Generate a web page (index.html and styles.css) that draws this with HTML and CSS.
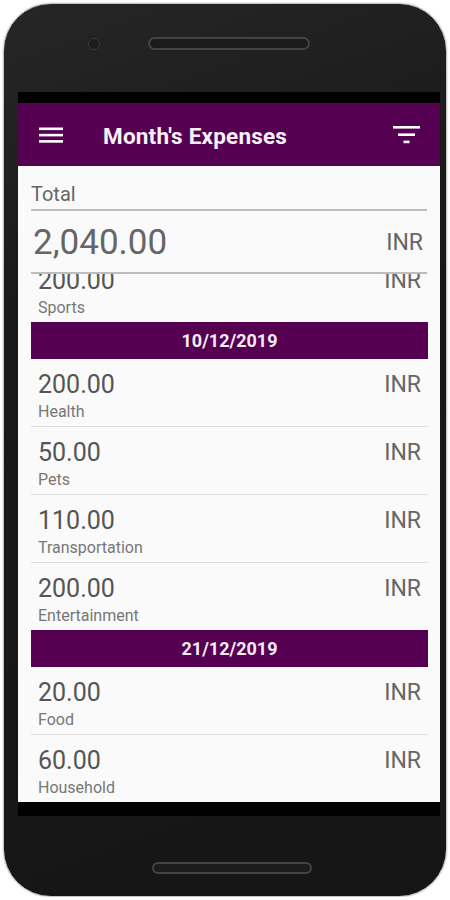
FILE: index.html
```html
<!DOCTYPE html>
<html lang="en">
<head>
    <meta charset="UTF-8">
    <meta name="viewport" content="width=device-width, initial-scale=1.0">
    <title>Month's Expenses</title>
    <link rel="stylesheet" href="styles.css">
</head>
<body>
    <div class="phone">
        <div class="bezel-top">
            <span class="camera"></span>
            <span class="speaker"></span>
        </div>

        <div class="screen">
            <div class="status-bar"></div>

            <div class="app-bar">
                <svg class="menu-icon" width="24" height="16" viewBox="0 0 24 16">
                    <rect x="0" y="0.5" width="24" height="2.6" fill="#fff"/>
                    <rect x="0" y="6.8" width="24" height="2.6" fill="#fff"/>
                    <rect x="0" y="13.1" width="24" height="2.6" fill="#fff"/>
                </svg>
                <h1 class="title">Month's Expenses</h1>
                <svg class="filter-icon" width="28" height="18" viewBox="0 0 28 18">
                    <rect x="0" y="0" width="27" height="2.6" fill="#fff"/>
                    <rect x="5" y="7.4" width="17" height="2.6" fill="#fff"/>
                    <rect x="10.5" y="14.6" width="6" height="2.6" fill="#fff"/>
                </svg>
            </div>

            <div class="content">
                <div class="total">
                    <div class="total-label">Total</div>
                    <div class="total-row">
                        <span class="total-amount">2,040.00</span>
                        <span class="currency">INR</span>
                    </div>
                </div>

                <!-- list is scrolled a little, first row sits under the total -->
                <div class="list-view">
                    <div class="list">
                        <div class="row first">
                            <div class="row-main">
                                <span class="amount">200.00</span>
                                <span class="category">Sports</span>
                            </div>
                            <span class="currency">INR</span>
                        </div>

                        <div class="date-header">10/12/2019</div>
                        <div class="row">
                            <div class="row-main">
                                <span class="amount">200.00</span>
                                <span class="category">Health</span>
                            </div>
                            <span class="currency">INR</span>
                        </div>
                        <div class="row">
                            <div class="row-main">
                                <span class="amount">50.00</span>
                                <span class="category">Pets</span>
                            </div>
                            <span class="currency">INR</span>
                        </div>
                        <div class="row">
                            <div class="row-main">
                                <span class="amount">110.00</span>
                                <span class="category">Transportation</span>
                            </div>
                            <span class="currency">INR</span>
                        </div>
                        <div class="row">
                            <div class="row-main">
                                <span class="amount">200.00</span>
                                <span class="category">Entertainment</span>
                            </div>
                            <span class="currency">INR</span>
                        </div>

                        <div class="date-header">21/12/2019</div>
                        <div class="row">
                            <div class="row-main">
                                <span class="amount">20.00</span>
                                <span class="category">Food</span>
                            </div>
                            <span class="currency">INR</span>
                        </div>
                        <div class="row">
                            <div class="row-main">
                                <span class="amount">60.00</span>
                                <span class="category">Household</span>
                            </div>
                            <span class="currency">INR</span>
                        </div>
                    </div>
                </div>
            </div>

            <div class="nav-bar"></div>
        </div>

        <div class="bezel-bottom">
            <span class="speaker"></span>
        </div>
    </div>
</body>
</html>
```

FILE: styles.css
```css
* {
    box-sizing: border-box;
}
body {
    margin: 0;
    background-color: #ffffff;
    font-family: Roboto, "Liberation Sans", Arial, sans-serif;
}
.phone {
    width: 444px;
    height: 894px;
    margin: 3px 0 0 3px;
    display: flex;
    flex-direction: column;
    border: 1px solid #c4c4c4;
    border-radius: 48px;
    background: linear-gradient(160deg, #262626 0%, #1a1a1a 30%, #151515 100%);
    box-shadow: 0 0 2px rgba(0,0,0,0.25);
    overflow: hidden;
}
.bezel-top {
    height: 88px;
    display: flex;
    align-items: flex-start;
    padding: 33px 0 0 84px;
    gap: 48px;
}
.camera {
    width: 12px;
    height: 12px;
    margin-top: 1px;
    border-radius: 50%;
    background-color: #1c1c1c;
    border: 1.5px solid #3a3a3a;
}
.speaker {
    width: 162px;
    height: 13px;
    border-radius: 7px;
    background-color: #1b1b1b;
    border: 2px solid #444;
}
.screen {
    margin: 0 6px 0 14px;
    display: flex;
    flex-direction: column;
    height: 724px;
}
.status-bar {
    height: 11px;
    background-color: #000;
}
.app-bar {
    height: 63px;
    background-color: #560051;
    display: flex;
    align-items: center;
    padding: 0 19px 0 21px;
}
.menu-icon {
    flex-shrink: 0;
    margin-top: 1px;
}
.title {
    margin: 2px 0 0 40px;
    flex: 1;
    color: #f8f0f8;
    font-size: 22.5px;
    font-weight: bold;
    letter-spacing: 0.2px;
}
.filter-icon {
    flex-shrink: 0;
    margin-top: 1px;
}
.content {
    height: 636px;
    background-color: #fafafa;
    display: flex;
    flex-direction: column;
}
.total {
    padding: 0 13px;
}
.total-label {
    height: 45px;
    padding-top: 16px;
    margin-bottom: 2px;
    font-size: 20px;
    line-height: 24px;
    color: #666;
    border-bottom: 2px solid #bdbdbd;
}
.total-row {
    display: flex;
    justify-content: space-between;
    align-items: center;
    padding: 9px 4px 8px 2px;
    border-bottom: 2px solid #bdbdbd;
}
.total-amount {
    font-size: 35px;
    line-height: 42px;
    color: #666;
}
.currency {
    font-size: 23px;
    line-height: 28px;
    color: #666;
}
.list-view {
    flex: 1;
    overflow: hidden;
}
.list {
    margin: 0 12px 0 13px;
}
.row {
    height: 67px;
    display: flex;
    justify-content: space-between;
    align-items: flex-start;
    padding: 12px 7px 0 7px;
}
.row + .row {
    height: 68px;
    border-top: 1px solid #dedede;
}
.row.first {
    margin-top: -19px;
}
.row-main {
    display: flex;
    flex-direction: column;
}
.amount {
    font-size: 25px;
    line-height: 28px;
    color: #555;
}
.category {
    margin-top: 3px;
    font-size: 16px;
    line-height: 20px;
    color: #777;
}
.date-header {
    height: 37px;
    background-color: #560051;
    color: #f4ecf4;
    font-size: 18px;
    font-weight: bold;
    line-height: 37px;
    text-align: center;
}
.nav-bar {
    height: 14px;
    background-color: #000;
}
.bezel-bottom {
    flex: 1;
    display: flex;
    justify-content: center;
    padding: 46px 0 0 0;
}
.bezel-bottom .speaker {
    margin-left: 14px;
    width: 160px;
    height: 12px;
}
```
